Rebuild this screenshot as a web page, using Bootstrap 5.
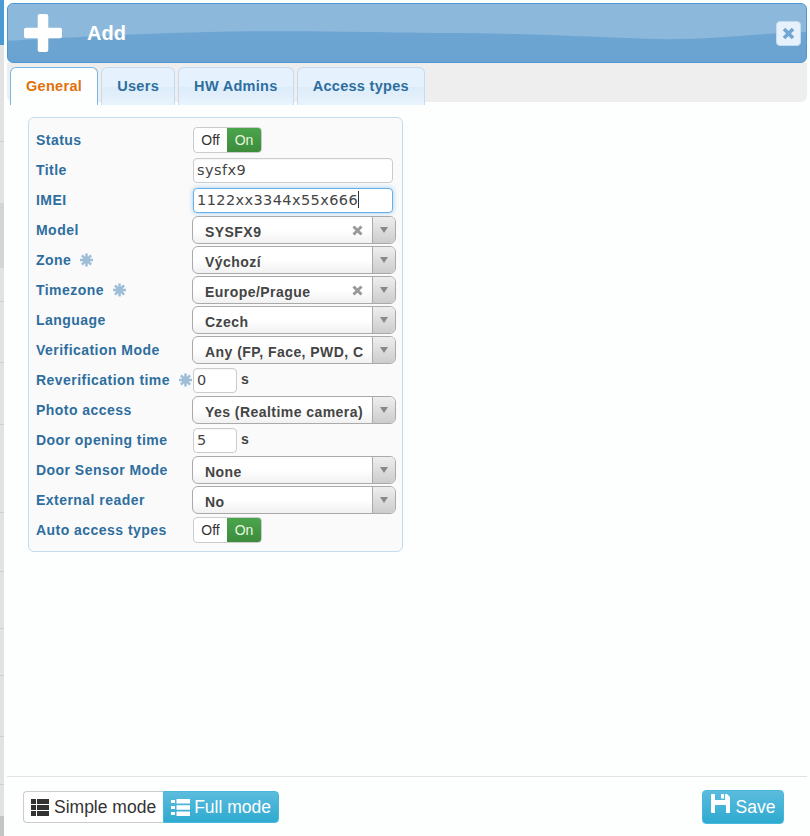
<!DOCTYPE html>
<html lang="en">
<head>
    <meta charset="UTF-8">
    <title>Add</title>
    <link href="https://cdn.jsdelivr.net/npm/bootstrap@5.3.0/dist/css/bootstrap.min.css" rel="stylesheet">
    <style>
        html, body { height: 836px; overflow: hidden; }
        body { background: #fdfefe; font-family: "Liberation Sans", Arial, sans-serif; font-size: 14px; }

        .page-shell { height: 836px; }
        .side-strip { width: 4px; flex: none;
            background: linear-gradient(#4a9ad4 0 45px, #e2e2e2 45px 141px, #cfcfcf 141px 142px, #e2e2e2 142px 203px, #d4d4d4 203px 268px,
                #e2e2e2 268px 301px, #cfcfcf 301px 302px, #e2e2e2 302px 362px, #cfcfcf 362px 363px, #e2e2e2 363px 424px, #cfcfcf 424px 425px,
                #e2e2e2 425px 512px, #cfcfcf 512px 513px, #e2e2e2 513px 571px, #cfcfcf 571px 572px, #e2e2e2 572px 628px, #cfcfcf 628px 629px,
                #e2e2e2 629px 675px, #cfcfcf 675px 676px, #e2e2e2 676px 736px, #cfcfcf 736px 737px, #e2e2e2 737px 784px, #cfcfcf 784px 785px,
                #e2e2e2 785px 816px, #c4c4c4 816px); }
        .dialog-box { width: 800px; margin-left: 3px; padding-top: 3px; height: 836px; }

        /* header */
        .dlg-head { height: 60px; border: 1px solid #4f97d3; border-radius: 6px; padding: 0 5px 0 16px; position: relative; overflow: hidden;
            background: linear-gradient(#72a8d4, #69a2d0); }
        .head-gloss { position: absolute; left: 0; top: 0; width: 100%; height: 100%; }
        .dlg-head > svg.plus-ico, .dlg-title, .dlg-close { position: relative; }
        .dlg-title { color: #fff; font-size: 20px; font-weight: 700; margin-left: 25px; }
        .dlg-close { width: 25px; height: 25px; border-radius: 4px; border: 1px solid #c3dbf0; background: #e6f1fb; padding: 0; line-height: 0; }

        /* tabs */
        .tab-strip { height: 39px; background: #eee; border-radius: 0 0 6px 6px; padding: 4px 0 0 3px; gap: 3px; }
        .tab-item { height: 38px; min-width: 74px; text-align: center; padding: 8px 15px 0; border: 1px solid #c5dbf0; border-bottom: 0; border-radius: 6px 6px 0 0;
            background: linear-gradient(#e5f1fc 50%, #dcecfa 52%, #e9f3fc 100%); color: #2e6e9e; font-weight: 700; font-size: 14.5px; letter-spacing: .3px; }
        .tab-item.is-current { background: #fdfefe; border-color: #79b7e7; color: #e17009; position: relative; z-index: 1; }

        /* form */
        .dlg-body { flex: 1; padding: 15px 0 0 21px; }
        .form-panel { width: 375px; height: 435px; border: 1px solid #c5dbec; border-radius: 6px; background: #fafafa; padding: 7px 6px 0 7px; }
        .form-line { height: 30px; }
        .form-lbl { width: 157px; flex: none; color: #2e6e9e; font-weight: 700; font-size: 14px; letter-spacing: .46px; white-space: nowrap; }
        .req-mark { width: 13px; height: 14px; margin-left: 9px; flex: none; }

        .switch-box { width: 69px; height: 26px; border: 1px solid #ccc; border-radius: 4px; overflow: hidden; background: #fff; font-size: 14px; line-height: 24px; }
        .switch-off { width: 33px; text-align: center; color: #333; }
        .switch-on { flex: 1; text-align: center; color: #e8f5e0; background: linear-gradient(#4ba54b, #3c8c3c); }

        .txt-field { width: 200px; height: 25px; border: 1px solid #ccc; border-radius: 4px; background: #fff; padding: 0 3px; color: #444;
            font-family: "DejaVu Sans", sans-serif; font-size: 14.5px; line-height: 23px; letter-spacing: .4px; box-shadow: inset 0 1px 1px rgba(0,0,0,.04); }
        .txt-field.is-focus { border-color: #66afe9; box-shadow: 0 0 5px rgba(102,175,233,.6); }
        .caret-bar { display: inline-block; width: 1px; height: 17px; background: #333; vertical-align: -3px; }
        .num-field { width: 44px; }
        .unit-txt { color: #444; font-weight: 700; margin-left: 4px; padding-bottom: 2px; }

        .combo-box { width: 204px; height: 28px; margin-left: -1px; border: 1px solid #aaa; border-radius: 6px; overflow: hidden;
            background: linear-gradient(#fff 50%, #f1f1f1 100%); }
        .combo-val { flex: 1; min-width: 0; margin-right: 9px; padding: 5px 0 0 12px; font-weight: 700; font-size: 14px; letter-spacing: .45px; color: #444; white-space: nowrap; overflow: hidden; }
        .combo-clear { width: 20px; flex: none; margin-left: -9px; line-height: 0; padding-top: 8px; }
        .combo-arrow { width: 23px; flex: none; border-left: 1px solid #aaa; background: linear-gradient(#eee, #ccc); }
        .combo-arrow i { display: block; width: 0; height: 0; border-left: 4px solid transparent; border-right: 4px solid transparent; border-top: 6px solid #888; }

        /* footer */
        .dlg-foot { height: 60px; border-top: 1px solid #e2e2e2; padding: 14px 23px 0 16px; }
        .mode-btn { height: 32px; font-size: 17.5px; line-height: 30px; padding: 0 7px; border: 1px solid #ccc; color: #333; background: #fff; display: flex; align-items: center; gap: 5px; }
        .mode-btn.first-one { border-radius: 4px 0 0 4px; border-right: 0; }
        .mode-btn.last-one { border-radius: 0 4px 4px 0; border-color: #46b8da; color: #fff; gap: 4px; background: linear-gradient(#5bbcdd, #2eaad0); }
        .save-btn { width: 82px; height: 34px; margin-top: -1px; border: 1px solid #46b8da; border-radius: 4px; color: #fff; font-size: 17.5px;
            background: linear-gradient(#5bbcdd, #2eaad0); gap: 6px; padding: 0; }
        .save-ico { margin-bottom: 7px; }
    </style>
</head>
<body>

<svg width="0" height="0" class="d-block">
    <symbol id="reqIco" viewBox="0 0 24 24">
        <g stroke="#9ebdd6" stroke-width="4.600">
            <path d="M12 0v24M0 12h24M3.500 3.500l17 17M20.500 3.500l-17 17"/>
        </g>
        <circle cx="12" cy="12" r="6.500" fill="#9ebdd6"/>
    </symbol>
    <symbol id="clearIco" viewBox="0 0 11 11">
        <path d="M1.500 1.500l8 8M9.500 1.500l-8 8" stroke="#999" stroke-width="3"/>
    </symbol>
</svg>

<div class="page-shell d-flex">
    <div class="side-strip"></div>
    <div class="dialog-box d-flex flex-column">

        <!-- header -->
        <div class="dlg-head d-flex align-items-center">
            <svg class="head-gloss" viewBox="0 0 800 60" preserveAspectRatio="none"><path d="M0 0H800V29C740 31 700 38 640 36C560 33 500 30 440 30C340 29 270 27 200 29C120 31 60 35 0 38Z" fill="#8cb8db"/></svg>
            <svg class="plus-ico" width="38" height="38" viewBox="1 1 36 36"><path d="M14 3a2 2 0 0 1 2-2h6a2 2 0 0 1 2 2v11h11a2 2 0 0 1 2 2v6a2 2 0 0 1-2 2H24v11a2 2 0 0 1-2 2h-6a2 2 0 0 1-2-2V24H3a2 2 0 0 1-2-2v-6a2 2 0 0 1 2-2h11z" fill="#fff"/></svg>
            <span class="dlg-title">Add</span>
            <button class="dlg-close ms-auto d-flex align-items-center justify-content-center" type="button">
                <svg width="13" height="13" viewBox="0 0 13 13"><path d="M2 2l9 9M11 2l-9 9" stroke="#6fa6d2" stroke-width="3.600"/></svg>
            </button>
        </div>

        <!-- tabs -->
        <div class="tab-strip d-flex">
            <div class="tab-item is-current">General</div>
            <div class="tab-item">Users</div>
            <div class="tab-item">HW Admins</div>
            <div class="tab-item">Access types</div>
        </div>

        <!-- form -->
        <div class="dlg-body">
            <div class="form-panel">
                <div class="form-line d-flex align-items-center">
                    <div class="form-lbl">Status</div>
                    <div class="switch-box d-flex"><div class="switch-off">Off</div><div class="switch-on">On</div></div>
                </div>
                <div class="form-line d-flex align-items-center">
                    <div class="form-lbl">Title</div>
                    <div class="txt-field">sysfx9</div>
                </div>
                <div class="form-line d-flex align-items-center">
                    <div class="form-lbl">IMEI</div>
                    <div class="txt-field is-focus">1122xx3344x55x666<span class="caret-bar"></span></div>
                </div>
                <div class="form-line d-flex align-items-center">
                    <div class="form-lbl">Model</div>
                    <div class="combo-box d-flex">
                        <div class="combo-val">SYSFX9</div>
                        <div class="combo-clear"><svg width="11" height="11"><use href="#clearIco"/></svg></div>
                        <div class="combo-arrow d-flex align-items-center justify-content-center"><i></i></div>
                    </div>
                </div>
                <div class="form-line d-flex align-items-center">
                    <div class="form-lbl d-flex align-items-center">Zone<svg class="req-mark"><use href="#reqIco"/></svg></div>
                    <div class="combo-box d-flex">
                        <div class="combo-val">Výchozí</div>
                        <div class="combo-arrow d-flex align-items-center justify-content-center"><i></i></div>
                    </div>
                </div>
                <div class="form-line d-flex align-items-center">
                    <div class="form-lbl d-flex align-items-center">Timezone<svg class="req-mark"><use href="#reqIco"/></svg></div>
                    <div class="combo-box d-flex">
                        <div class="combo-val">Europe/Prague</div>
                        <div class="combo-clear"><svg width="11" height="11"><use href="#clearIco"/></svg></div>
                        <div class="combo-arrow d-flex align-items-center justify-content-center"><i></i></div>
                    </div>
                </div>
                <div class="form-line d-flex align-items-center">
                    <div class="form-lbl">Language</div>
                    <div class="combo-box d-flex">
                        <div class="combo-val">Czech</div>
                        <div class="combo-arrow d-flex align-items-center justify-content-center"><i></i></div>
                    </div>
                </div>
                <div class="form-line d-flex align-items-center">
                    <div class="form-lbl">Verification Mode</div>
                    <div class="combo-box d-flex">
                        <div class="combo-val">Any (FP, Face, PWD, C</div>
                        <div class="combo-arrow d-flex align-items-center justify-content-center"><i></i></div>
                    </div>
                </div>
                <div class="form-line d-flex align-items-center">
                    <div class="form-lbl d-flex align-items-center">Reverification time<svg class="req-mark"><use href="#reqIco"/></svg></div>
                    <div class="txt-field num-field">0</div>
                    <div class="unit-txt">s</div>
                </div>
                <div class="form-line d-flex align-items-center">
                    <div class="form-lbl">Photo access</div>
                    <div class="combo-box d-flex">
                        <div class="combo-val">Yes (Realtime camera)</div>
                        <div class="combo-arrow d-flex align-items-center justify-content-center"><i></i></div>
                    </div>
                </div>
                <div class="form-line d-flex align-items-center">
                    <div class="form-lbl">Door opening time</div>
                    <div class="txt-field num-field">5</div>
                    <div class="unit-txt">s</div>
                </div>
                <div class="form-line d-flex align-items-center">
                    <div class="form-lbl">Door Sensor Mode</div>
                    <div class="combo-box d-flex">
                        <div class="combo-val">None</div>
                        <div class="combo-arrow d-flex align-items-center justify-content-center"><i></i></div>
                    </div>
                </div>
                <div class="form-line d-flex align-items-center">
                    <div class="form-lbl">External reader</div>
                    <div class="combo-box d-flex">
                        <div class="combo-val">No</div>
                        <div class="combo-arrow d-flex align-items-center justify-content-center"><i></i></div>
                    </div>
                </div>
                <div class="form-line d-flex align-items-center">
                    <div class="form-lbl">Auto access types</div>
                    <div class="switch-box d-flex"><div class="switch-off">Off</div><div class="switch-on">On</div></div>
                </div>
            </div>
        </div>

        <!-- footer -->
        <div class="dlg-foot d-flex justify-content-between align-items-start">
            <div class="d-flex">
                <div class="mode-btn first-one">
                    <svg width="18" height="17" viewBox="0 0 18 17" fill="#333"><path d="M0 0h5v5H0zM6 0h12v5H6zM0 6h5v5H0zM6 6h12v5H6zM0 12h5v5H0zM6 12h12v5H6z"/></svg>
                    Simple mode
                </div>
                <div class="mode-btn last-one">
                    <svg width="19" height="17" viewBox="0 0 19 17" fill="#fff"><path d="M0 1h4v3H0zM5.500 0H19v4.500H5.500zM0 7h4v3H0zM5.500 6.200H19v4.500H5.500zM0 13h4v3H0zM5.500 12.500H19V17H5.500z"/></svg>
                    Full mode
                </div>
            </div>
            <button class="save-btn d-flex align-items-center justify-content-center" type="button">
                <svg class="save-ico" width="19" height="19" viewBox="0 0 19 19" fill="#fff"><path d="M1 0H4V6H14V0H16L19 3V19H15V11H4V19H1a1 1 0 0 1-1-1V1a1 1 0 0 1 1-1zM10 0h3v4.500h-3z"/></svg>
                Save
            </button>
        </div>

    </div>
</div>

<script src="https://cdn.jsdelivr.net/npm/bootstrap@5.3.0/dist/js/bootstrap.bundle.min.js"></script>
</body>
</html>
